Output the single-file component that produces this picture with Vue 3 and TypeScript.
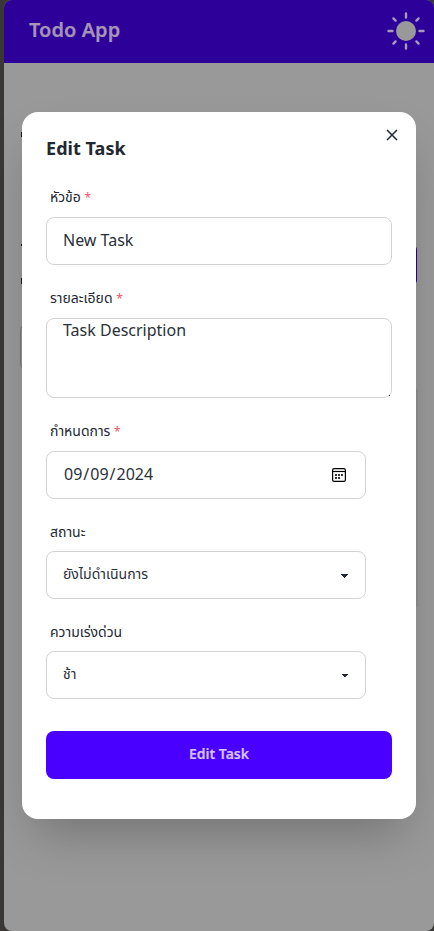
<script setup lang="ts">
import { ref } from 'vue'

const title = ref('New Task')
const description = ref('Task Description')
const dueDate = ref('2024-09-09')
const status = ref('ยังไม่ดำเนินการ')
const urgency = ref('ช้า')
</script>

<template>
  <div class="frame">
    <div class="page">
      <header class="navbar">
        <span class="brand">Todo App</span>
        <svg class="sun" viewBox="-20 -20 40 40" aria-hidden="true">
          <circle r="10" />
          <path d="M-17.5 0h4M13.5 0h4M0-17.5v4M0 13.5v4M-12.6-12.6l2.2 2.2M12.6-12.6l-2.2 2.2M-12.6 12.6l2.2-2.2M12.6 12.6l-2.2-2.2" />
        </svg>
      </header>
      <main class="content">
        <i class="mark heading"></i>
        <i class="mark name"></i>
        <i class="add"></i>
        <i class="mark detail"></i>
        <i class="filter"></i>
        <i class="list"></i>
      </main>
    </div>
    <div class="overlay">
      <form class="modal" @submit.prevent>
        <button class="close" type="button" aria-label="Close">
          <svg viewBox="0 0 12 12"><path d="M1 1l10 10M11 1L1 11" /></svg>
        </button>
        <h3>Edit Task</h3>
        <label class="field">
          <span class="caption">หัวข้อ <b>*</b></span>
          <input v-model="title" class="control" type="text" />
        </label>
        <label class="field description">
          <span class="caption">รายละเอียด <b>*</b></span>
          <textarea v-model="description" class="control area"></textarea>
        </label>
        <label class="field short">
          <span class="caption">กำหนดการ <b>*</b></span>
          <span class="control date">
            <input v-model="dueDate" type="date" />
            <svg class="calendar" viewBox="0 0 14 14" aria-hidden="true">
              <rect x=".6" y=".6" width="12.8" height="12.8" rx="1.6" />
              <path d="M.5 3.5h13" />
              <path class="days" d="M3 7h2M6 7h2M9 7h2M3 10h2M6 10h2" />
            </svg>
          </span>
        </label>
        <label class="field short">
          <span class="caption low">สถานะ</span>
          <select v-model="status" class="control select">
            <option>ยังไม่ดำเนินการ</option>
          </select>
        </label>
        <label class="field short">
          <span class="caption low">ความเร่งด่วน</span>
          <select v-model="urgency" class="control select">
            <option>ช้า</option>
          </select>
        </label>
        <button class="submit" type="submit">Edit Task</button>
      </form>
    </div>
  </div>
</template>

<style>
body {
  margin: 0;
  overflow: hidden;
}
</style>

<style scoped>
* {
  box-sizing: border-box;
}
.frame {
  position: relative;
  height: 931px;
  padding-left: 4px;
  background: #393836;
  font-family: "Noto Sans", "Noto Sans Thai", sans-serif;
  color: #222831;
}
.page {
  height: 100%;
  border-radius: 8px;
  overflow: hidden;
  background: #999;
}
.navbar {
  display: flex;
  align-items: center;
  justify-content: space-between;
  height: 63px;
  padding: 0 8px 2px 25px;
  background: #2c0099;
}
.brand {
  padding-bottom: 2px;
  font-size: 20px;
  font-weight: 600;
  line-height: 28px;
  letter-spacing: 0.05px;
  color: #a694b5;
  -webkit-text-stroke: 0.2px #a694b5;
}
.sun {
  width: 40px;
  height: 40px;
  fill: #999;
}
.sun path {
  stroke: #a99ab8;
  stroke-width: 2.4;
  stroke-linecap: round;
}
.content {
  display: flex;
  flex-direction: column;
  padding: 69px 17px 0 16px;
}
.content i {
  flex: none;
}
.mark {
  width: 4px;
  margin-left: 1px;
  background: #151a20;
}
.heading {
  height: 5px;
}
.name {
  height: 2px;
  margin-top: 107px;
}
.add {
  align-self: flex-end;
  width: 60px;
  height: 38px;
  border-radius: 4px;
  background: #2c0099;
}
.detail {
  height: 6px;
  margin-top: -6px;
}
.filter {
  width: 120px;
  height: 48px;
  margin-top: 39px;
  border: 1px solid #777;
  border-radius: 8px;
}
.list {
  height: 218px;
  margin: 18px -1px 0 20px;
  background: #909090;
}
.overlay {
  position: absolute;
  inset: 0;
  display: flex;
  align-items: center;
  padding: 0 18px 0 22px;
}
.modal {
  position: relative;
  width: 100%;
  height: 707px;
  padding: 22px 24px 24px;
  border-radius: 16px;
  background: #fff;
  box-shadow: 0 25px 50px -12px rgba(0, 0, 0, 0.25);
}
.close {
  position: absolute;
  top: 7px;
  right: 8px;
  display: grid;
  place-items: center;
  width: 32px;
  height: 32px;
  padding: 0;
  border: 0;
  background: none;
}
.close svg {
  width: 12px;
  height: 12px;
  fill: none;
  stroke: #222831;
  stroke-width: 1.5;
}
h3 {
  margin: 0 0 19px;
  font-size: 18px;
  line-height: 28px;
  font-weight: 700;
  letter-spacing: 0.05px;
}
.field {
  display: block;
  margin-bottom: 17px;
}
.short {
  width: 320px;
  margin-bottom: 16px;
}
.caption {
  display: block;
  height: 36px;
  padding: 6px 4px 0;
  font-size: 14px;
  line-height: 20px;
}
.caption.low {
  padding-top: 7px;
}
.caption b {
  font-size: 12px;
  font-weight: 400;
  color: #f0526a;
}
.control {
  display: block;
  width: 100%;
  height: 48px;
  margin: 0;
  padding: 0 16px 2px;
  border: 1px solid #d2d3d5;
  border-radius: 8px;
  outline: 0;
  background: #fff;
  font: 16px/24px "Noto Sans", "Noto Sans Thai", sans-serif;
  color: #2a3038;
}
.description {
  position: relative;
}
/* resize grip showing in the rounded corner */
.description::after {
  content: "";
  position: absolute;
  right: 2px;
  bottom: 2px;
  width: 1px;
  height: 1px;
  background: #333;
}
.area {
  height: 80px;
  resize: none;
  line-height: 22px;
}
.date {
  display: flex;
  align-items: center;
  padding-right: 19px;
}
.date input {
  flex: 1;
  min-width: 0;
  padding: 0;
  border: 0;
  outline: 0;
  background: none;
  font: inherit;
  color: inherit;
}
.date input::-webkit-calendar-picker-indicator {
  display: none;
}
.calendar {
  flex: none;
  width: 14px;
  height: 14px;
  margin-top: 2px;
  fill: none;
  stroke: #000;
  stroke-width: 1.2;
}
.calendar .days {
  stroke: #333;
  stroke-width: 2;
}
.select {
  appearance: none;
  font-size: 14px;
  line-height: 28px;
  background-image: linear-gradient(45deg, transparent 50%, #222831 50%), linear-gradient(135deg, #222831 50%, transparent 50%);
  background-position: calc(100% - 20px) calc(1px + 50%), calc(100% - 16px) calc(1px + 50%);
  background-size: 4px 4px;
  background-repeat: no-repeat;
}
.submit {
  display: block;
  width: 100%;
  height: 48px;
  margin-top: 32px;
  padding: 0 0 2px;
  border: 0;
  border-radius: 8px;
  background: #4a00ff;
  font: 600 14px/20px "Noto Sans", sans-serif;
  color: #d6c5ff;
  -webkit-text-stroke: 0.2px #d6c5ff;
}
</style>
